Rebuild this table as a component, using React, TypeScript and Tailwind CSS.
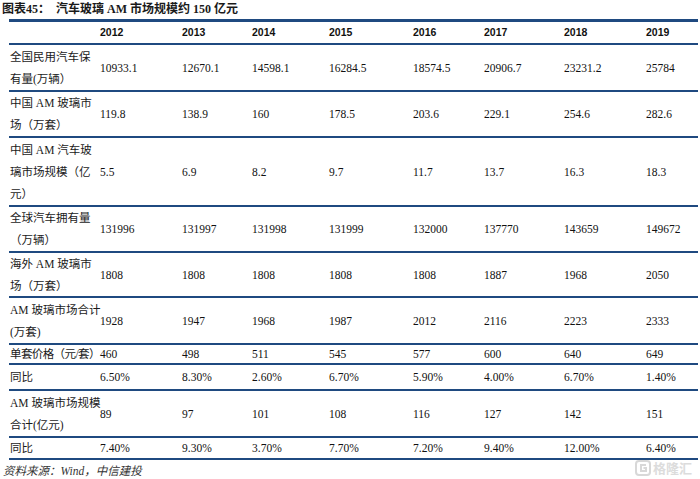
import React from "react";

const widths = [91, 82, 70, 77, 84, 71, 80, 82, 52];
const years = ["2012", "2013", "2014", "2015", "2016", "2017", "2018", "2019"];

type Row = { label: string[]; vals: string[]; h: number; tight?: boolean };

const rows: Row[] = [
  { label: ["全国民用汽车保", "有量(万辆）"], vals: ["10933.1", "12670.1", "14598.1", "16284.5", "18574.5", "20906.7", "23231.2", "25784"], h: 47 },
  { label: ["中国 AM 玻璃市", "场（万套）"], vals: ["119.8", "138.9", "160", "178.5", "203.6", "229.1", "254.6", "282.6"], h: 46 },
  { label: ["中国 AM 汽车玻", "璃市场规模（亿", "元）"], vals: ["5.5", "6.9", "8.2", "9.7", "11.7", "13.7", "16.3", "18.3"], h: 69 },
  { label: ["全球汽车拥有量", "（万辆）"], vals: ["131996", "131997", "131998", "131999", "132000", "137770", "143659", "149672"], h: 46 },
  { label: ["海外 AM 玻璃市", "场（万套）"], vals: ["1808", "1808", "1808", "1808", "1808", "1887", "1968", "2050"], h: 45 },
  { label: ["AM 玻璃市场合计", "(万套)"], vals: ["1928", "1947", "1968", "1987", "2012", "2116", "2223", "2333"], h: 47 },
  { label: ["单套价格（元/套）"], vals: ["460", "498", "511", "545", "577", "600", "640", "649"], h: 20, tight: true },
  { label: ["同比"], vals: ["6.50%", "8.30%", "2.60%", "6.70%", "5.90%", "4.00%", "6.70%", "1.40%"], h: 26 },
  { label: ["AM 玻璃市场规模", "合计(亿元)"], vals: ["89", "97", "101", "108", "116", "127", "142", "151"], h: 47 },
  { label: ["同比"], vals: ["7.40%", "9.30%", "3.70%", "7.70%", "7.20%", "9.40%", "12.00%", "6.40%"], h: 22 },
];

const serif = "font-['Liberation_Serif','Noto_Sans_CJK_SC',serif]";

export default function App() {
  return (
    <div className="relative w-[700px] h-[479px] bg-white overflow-hidden text-[#111]">
      <div
        className={`h-[19px] pl-[2px] leading-[19px] text-[12px] font-bold text-[#1a1a1a] ${serif}`}
      >
        图表45：&nbsp;&nbsp;汽车玻璃 AM 市场规模约 150 亿元
      </div>
      <div className="ml-[9px] mr-[2px] border-t-[3px] border-[#1f4a80]">
        {/* header */}
        <div className="flex h-[23px] items-center border-b-2 border-[#1f4a80]">
          <div className="w-[91px] shrink-0" />
          {years.map((y, i) => (
            <div
              key={y}
              style={{ width: widths[i + 1] }}
              className="shrink-0 font-['Liberation_Sans',sans-serif] font-bold text-[10.5px] text-[#111]"
            >
              {y}
            </div>
          ))}
        </div>
        {rows.map((r, ri) => (
          <div
            key={ri}
            style={{ height: r.h }}
            className={`flex items-center border-b-2 border-[#1f4a80] ${serif} text-[11.5px]`}
          >
            <div
              className={`w-[91px] shrink-0 pl-[1px] leading-[22px] whitespace-nowrap text-[#1a1a1a] ${
                r.tight ? "tracking-[-0.6px]" : ""
              }`}
            >
              {r.label.map((l, li) => (
                <div key={li}>{l}</div>
              ))}
            </div>
            {r.vals.map((v, vi) => (
              <div key={vi} style={{ width: widths[vi + 1] }} className="shrink-0 leading-[22px]">
                {v}
              </div>
            ))}
          </div>
        ))}
      </div>
      <div
        className={`mt-[3px] pl-[3px] italic text-[11.5px] leading-[16px] text-[#333] ${serif}`}
      >
        资料来源：Wind，中信建投
      </div>
      {/* watermark */}
      <div className="absolute left-[635px] top-[460px] flex items-center gap-[2px] opacity-80">
        <svg width="16" height="16" viewBox="0 0 16 16">
          <rect x="1" y="1" width="14" height="14" rx="3" fill="none" stroke="#cfcfcf" strokeWidth="2" />
          <path d="M11 5 H6 V11 H11 V8 H8.5" fill="none" stroke="#cfcfcf" strokeWidth="2" />
        </svg>
        <span className="font-['Noto_Sans_CJK_SC',sans-serif] font-bold text-[13px] leading-[16px] text-[#d4d4d4]">
          格隆汇
        </span>
      </div>
    </div>
  );
}
